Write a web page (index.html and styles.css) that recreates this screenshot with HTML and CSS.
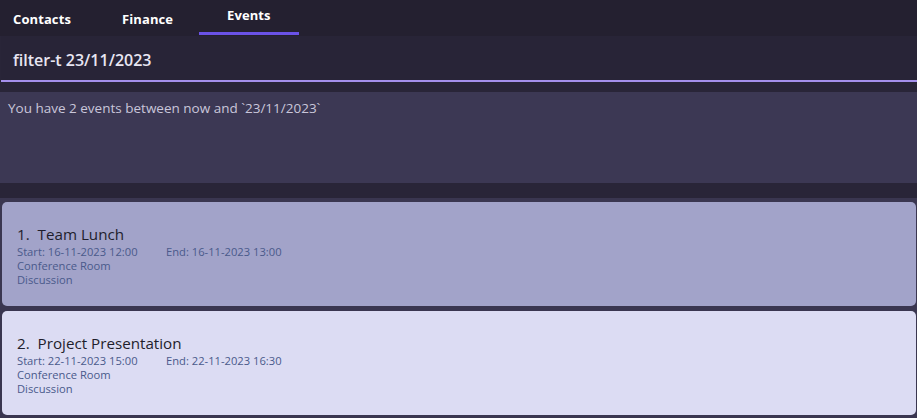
FILE: index.html
```html
<!DOCTYPE html>
<html>
<head>
<meta charset="utf-8">
<link rel="stylesheet" href="styles.css">
</head>
<body>
<div class="app">
  <div class="tabs">
    <div class="tab tab-contacts">Contacts</div>
    <div class="tab tab-finance">Finance</div>
    <div class="tab tab-events active">Events</div>
  </div>
  <div class="command">
    <div class="command-text">filter-t 23/11/2023</div>
  </div>
  <div class="result-wrap">
    <div class="result">You have 2 events between now and `23/11/2023`</div>
  </div>
  <div class="list">
    <div class="card card-1">
      <div class="title">1.&nbsp; Team Lunch</div>
      <div class="row"><span class="start">Start: 16-11-2023 12:00</span><span>End: 16-11-2023 13:00</span></div>
      <div class="row">Conference Room</div>
      <div class="row">Discussion</div>
    </div>
    <div class="card card-2">
      <div class="title">2.&nbsp; Project Presentation</div>
      <div class="row"><span class="start">Start: 22-11-2023 15:00</span><span>End: 22-11-2023 16:30</span></div>
      <div class="row">Conference Room</div>
      <div class="row">Discussion</div>
    </div>
  </div>
</div>
</body>
</html>
```
FILE: styles.css
```css
* { box-sizing: border-box; }
html, body { margin: 0; padding: 0; }
body {
  width: 917px;
  height: 418px;
  overflow: hidden;
  background: #292538;
  font-family: "Open Sans", "Noto Sans", sans-serif;
}
.app { display: flex; flex-direction: column; height: 418px; }
.tabs {
  height: 36px;
  background: #242030;
  display: flex;
}
.tab {
  color: #ffffff;
  font-weight: 700;
  font-size: 13px;
  line-height: 16px;
  padding-top: 11px;
  letter-spacing: 0.1px;
}
.tab-contacts { width: 99px; padding-left: 13px; }
.tab-finance { width: 100px; padding-left: 23px; }
.tab-events {
  width: 100px;
  height: 35px;
  padding-left: 28px;
  padding-top: 7px;
  border-bottom: 3px solid #6a52e6;
}
.command {
  height: 46px;
  background: #282437;
  border-bottom: 2px solid #a590ec;
  margin-left: 1px;
  padding: 14px 0 0 12px;
}
.command-text {
  color: #e8e6f2;
  font-size: 16px;
  font-weight: 600;
  line-height: 20px;
}
.result-wrap {
  padding: 10px 0 15px 0;
  background: #292538;
}
.result {
  height: 91px;
  background: #3c3854;
  color: #c9c6da;
  font-size: 13.5px;
  line-height: 18px;
  padding: 7px 8px;
}
.list {
  flex: 1;
  background: #3a3650;
  padding: 4px 1px 0 2px;
  display: flex;
  flex-direction: column;
  gap: 5px;
}
.card {
  height: 104px;
  border-radius: 5px;
  padding: 21px 0 0 15px;
}
.card-1 { background: #a2a3c9; }
.card-2 { background: #dcdcf3; }
.title {
  font-size: 15.2px;
  line-height: 22px;
  color: #1f1e2c;
}
.row {
  font-size: 11.2px;
  line-height: 14px;
  color: #4a5a8b;
  display: flex;
}
.start { width: 149px; }
```
